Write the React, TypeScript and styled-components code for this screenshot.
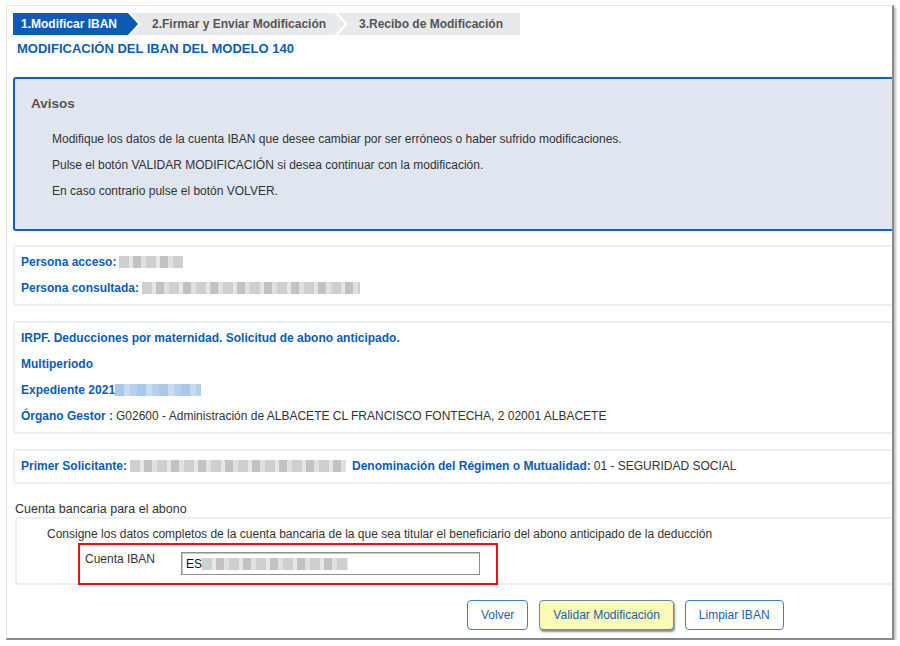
import styled, { createGlobalStyle } from "styled-components";

const GlobalStyle = createGlobalStyle`
  html, body {
    margin: 0;
    padding: 0;
    background: #ffffff;
  }
  body {
    font-family: "Liberation Sans", Arial, sans-serif;
    font-size: 12px;
    color: #333333;
  }
`;

const Window = styled("div")`
  margin: 5px 0 0 6px;
  width: 888px;
  height: 635px;
  box-sizing: border-box;
  overflow: hidden;
  border-top: 1px solid #e4e4e4;
  border-left: 1px solid #e4e4e4;
  border-right: 2px solid #8a8a8a;
  border-bottom: 2px solid #8a8a8a;
  box-shadow: 2px 2px 2px rgba(0, 0, 0, 0.25);
  padding: 7px 0 0 6px;
`;

const Steps = styled("div")`
  display: flex;
  height: 22px;
`;

const Step = styled("div")<{ $active?: boolean; $first?: boolean; $w: number }>`
  width: ${(p) => p.$w}px;
  flex: none;
  display: flex;
  align-items: center;
  box-sizing: border-box;
  padding-left: ${(p) => (p.$first ? 8 : 21)}px;
  margin-left: ${(p) => (p.$first ? 0 : -7)}px;
  background: ${(p) => (p.$active ? "#0b5cb5" : "#e8e9eb")};
  color: ${(p) => (p.$active ? "#ffffff" : "#555555")};
  font-weight: bold;
  font-size: 12px;
  white-space: nowrap;
  clip-path: ${(p) =>
    p.$first
      ? "polygon(0 0, calc(100% - 10px) 0, 100% 50%, calc(100% - 10px) 100%, 0 100%)"
      : "polygon(0 0, calc(100% - 10px) 0, 100% 50%, calc(100% - 10px) 100%, 0 100%, 10px 50%)"};
`;

const LastStep = styled(Step)`
  clip-path: polygon(0 0, 100% 0, 100% 100%, 0 100%, 10px 50%);
`;

const Title = styled("h1")`
  margin: 6px 0 0 4px;
  font-size: 13px;
  font-weight: bold;
  color: #0b5cb5;
  line-height: 16px;
`;

const Box = styled("div")<{ $top: number }>`
  margin-top: ${(p) => p.$top}px;
  width: 900px;
  box-sizing: border-box;
  border: 2px solid #edf0f3;
  border-radius: 3px;
  padding: 7px 0 8px 6px;
  display: flex;
  flex-direction: column;
  gap: 10px;
`;

const Notice = styled("div")`
  margin-top: 20px;
  width: 900px;
  height: 154px;
  box-sizing: border-box;
  background: #dfe6ef;
  border: 2px solid #1b5fb3;
  border-radius: 3px;
  padding: 17px 0 0 16px;
`;

const NoticeTitle = styled("div")`
  font-size: 13.5px;
  font-weight: bold;
  color: #555555;
  line-height: 16px;
`;

const NoticeList = styled("div")`
  margin: 19px 0 0 21px;
  display: flex;
  flex-direction: column;
  gap: 10px;
`;

const Line = styled("div")`
  display: flex;
  align-items: center;
  line-height: 16px;
  white-space: nowrap;
  color: #333333;
`;

const Label = styled("span")<{ $tight?: boolean }>`
  color: #0b5cb5;
  font-weight: bold;
  margin-right: ${(p) => (p.$tight ? 0 : 3)}px;
`;

const Redacted = styled("span")<{ $w: number; $tone?: "gray" | "blue" }>`
  display: inline-block;
  width: ${(p) => p.$w}px;
  height: 12px;
  margin-right: 6px;
  background: ${(p) =>
    p.$tone === "blue"
      ? "repeating-linear-gradient(90deg, #a9c8ea 0 9px, #c7dbf1 9px 15px, #b6d0ee 15px 22px)"
      : "repeating-linear-gradient(90deg, #cfcfcf 0 10px, #e6e6e6 10px 14px, #c2c2c2 14px 22px, #e0e0e0 22px 27px)"};
  filter: blur(0.6px);
`;

const Section = styled("div")`
  margin: 17px 0 0 2px;
  line-height: 16px;
  font-size: 12.5px;
  color: #333333;
`;

const AccountBox = styled("div")`
  margin-left: 2px;
  width: 900px;
  height: 68px;
  box-sizing: border-box;
  border: 2px solid #edf0f3;
  border-radius: 3px;
  padding: 7px 0 0 30px;
`;

const Highlight = styled("div")`
  margin: 1px 0 0 31px;
  width: 420px;
  height: 42px;
  box-sizing: border-box;
  border: 2px solid #e8141b;
  display: flex;
  align-items: flex-start;
  padding: 6px 0 0 5px;
`;

const FieldLabel = styled("span")`
  width: 96px;
  line-height: 16px;
  color: #333333;
`;

const Input = styled("div")`
  width: 299px;
  height: 23px;
  margin-top: 1px;
  box-sizing: border-box;
  border: 1px solid #8f8f8f;
  box-shadow: inset 1px 1px 0 #c8c8c8;
  display: flex;
  align-items: center;
  padding-left: 4px;
  color: #111111;
`;

const Buttons = styled("div")`
  margin: 15px 0 0 454px;
  display: flex;
  gap: 11px;
`;

const Button = styled("button")<{ $primary?: boolean }>`
  height: 30px;
  padding: 0 13px;
  border: 1px solid ${(p) => (p.$primary ? "#6a8aa0" : "#3f7fc8")};
  border-radius: 4px;
  background: ${(p) => (p.$primary ? "#fbfbb8" : "#ffffff")};
  box-shadow: ${(p) => (p.$primary ? "1px 2px 2px rgba(0,0,0,0.45)" : "none")};
  color: #1a5fa9;
  font-family: "Liberation Sans", Arial, sans-serif;
  font-size: 12px;
`;

export default function App() {
  return (
    <>
      <GlobalStyle />
      <Window>
        <Steps>
          <Step $active $first $w={125}>
            1.Modificar IBAN
          </Step>
          <Step $w={214}>2.Firmar y Enviar Modificación</Step>
          <LastStep $w={182}>3.Recibo de Modificación</LastStep>
        </Steps>
        <Title>MODIFICACIÓN DEL IBAN DEL MODELO 140</Title>

        <Notice>
          <NoticeTitle>Avisos</NoticeTitle>
          <NoticeList>
            <Line>
              Modifique los datos de la cuenta IBAN que desee cambiar por ser
              erróneos o haber sufrido modificaciones.
            </Line>
            <Line>
              Pulse el botón VALIDAR MODIFICACIÓN si desea continuar con la
              modificación.
            </Line>
            <Line>En caso contrario pulse el botón VOLVER.</Line>
          </NoticeList>
        </Notice>

        <Box $top={14}>
          <Line>
            <Label>Persona acceso:</Label>
            <Redacted $w={64} />
          </Line>
          <Line>
            <Label>Persona consultada:</Label>
            <Redacted $w={218} />
          </Line>
        </Box>

        <Box $top={15}>
          <Line>
            <Label>IRPF. Deducciones por maternidad. Solicitud de abono anticipado.</Label>
          </Line>
          <Line>
            <Label>Multiperiodo</Label>
          </Line>
          <Line>
            <Label $tight>Expediente 2021</Label>
            <Redacted $w={86} $tone="blue" />
          </Line>
          <Line>
            <Label>Órgano Gestor :</Label>
            G02600 - Administración de ALBACETE CL FRANCISCO FONTECHA, 2 02001
            ALBACETE
          </Line>
        </Box>

        <Box $top={15}>
          <Line>
            <Label>Primer Solicitante:</Label>
            <Redacted $w={216} />
            <Label>Denominación del Régimen o Mutualidad:</Label>
            01 - SEGURIDAD SOCIAL
          </Line>
        </Box>

        <Section>Cuenta bancaria para el abono</Section>
        <AccountBox>
          <Line>
            Consigne los datos completos de la cuenta bancaria de la que sea
            titular el beneficiario del abono anticipado de la deducción
          </Line>
          <Highlight>
            <FieldLabel>Cuenta IBAN</FieldLabel>
            <Input>
              ES
              <Redacted $w={146} />
            </Input>
          </Highlight>
        </AccountBox>

        <Buttons>
          <Button>Volver</Button>
          <Button $primary>Validar Modificación</Button>
          <Button>Limpiar IBAN</Button>
        </Buttons>
      </Window>
    </>
  );
}
